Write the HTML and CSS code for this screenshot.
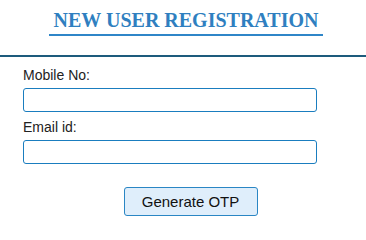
FILE: index.html
```html
<!DOCTYPE html>
<html>
<head>
<meta charset="utf-8">
<link rel="stylesheet" href="styles.css">
</head>
<body>
<div class="page">
  <header class="head">
    <h1 class="title">NEW USER REGISTRATION</h1>
  </header>
  <form class="form">
    <label class="label">Mobile No:</label>
    <input class="field" type="text">
    <label class="label">Email id:</label>
    <input class="field" type="text">
    <div class="actions">
      <button type="button" class="btn">Generate OTP</button>
    </div>
  </form>
</div>
</body>
</html>
```
FILE: styles.css
```css
html, body { margin: 0; padding: 0; background: #fff; }
.page { width: 366px; font-family: "Liberation Sans", Arial, sans-serif; }
.head {
  border-bottom: 2px solid #1d5b7c;
  height: 55px;
  display: flex;
  justify-content: center;
  align-items: flex-start;
}
.title {
  margin: 9px 0 0 6px;
  font-family: "Liberation Serif", "Times New Roman", serif;
  font-weight: bold;
  font-size: 20px;
  color: #2f7fc0;
  line-height: 22px;
  padding: 0 5px 3px;
  border-bottom: 2px solid #2f86c8;
}
.form {
  display: flex;
  flex-direction: column;
  padding: 10px 49px 0 23px;
}
.label {
  font-size: 14px;
  color: #222;
  line-height: 16px;
  margin-bottom: 5px;
}
.field {
  box-sizing: border-box;
  height: 24px;
  width: 294px;
  border: 1px solid #1a7dbf;
  border-radius: 3px;
  margin: 0 0 7px 0;
  padding: 0 4px;
  background: #fff;
}
.actions {
  display: flex;
  justify-content: center;
  margin: 16px -49px 0 -23px;
}
.btn {
  box-sizing: border-box;
  width: 134px;
  height: 29px;
  margin-left: 15px;
  background: #dfeefb;
  border: 1px solid #2a86c4;
  border-radius: 3px;
  font-family: "Liberation Sans", Arial, sans-serif;
  font-size: 15px;
  color: #111;
  padding: 0;
}
```
